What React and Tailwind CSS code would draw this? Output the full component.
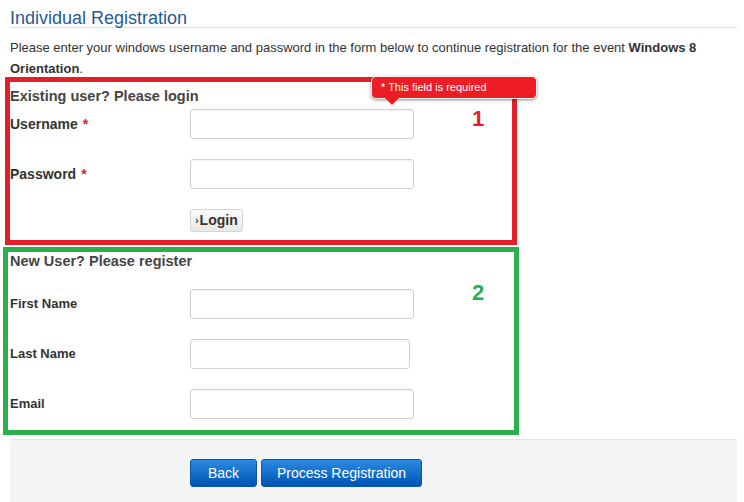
import React from 'react';

const Field = ({ label, required, width = 'w-[224px]', labelSize = 'text-[13px]' }) => (
  <div className="flex items-center h-[30px]">
    <label className={`w-[180px] font-bold text-[#333] ${labelSize}`}>
      {label}
      {required && <span className="text-[#e3202a] ml-[5px]">*</span>}
    </label>
    <input
      type="text"
      className={`${width} h-[30px] bg-white border border-[#cfcfcf] rounded-[3px] shadow-[inset_0_1px_1px_rgba(0,0,0,0.05)] outline-none`}
    />
  </div>
);

const App = () => {
  return (
    <div className="w-[744px] h-[502px] bg-white overflow-hidden font-['Liberation_Sans',Arial,sans-serif] text-[#333]">
      <div className="pl-[10px] pr-[7px]">
        <h1 className="pt-[9px] text-[18px] leading-[18px] text-[#1f5b93] border-b border-[#dedede]">
          Individual Registration
        </h1>
        <p className="mt-[9px] text-[13px] leading-[21px] text-[#333]">
          Please enter your windows username and password in the form below to continue registration for the event{' '}
          <b>Windows&nbsp;8</b> <b>Orientation</b>.
        </p>
      </div>

      {/* 1: login */}
      <div className="relative mt-[-2px] ml-[5px] w-[512px] border-[5px] border-[#e3202a] pt-[4px] pb-[8px]">
        <div className="text-[14.5px] leading-[20px] font-bold text-[#454545]">Existing user? Please login</div>
        <div className="mt-[3px] flex flex-col gap-[20px]">
          <Field label="Username" required labelSize="text-[14px]" />
          <Field label="Password" required labelSize="text-[14px]" />
          <div className="flex">
            <div className="w-[180px]" />
            <button className="h-[23px] w-[53px] flex items-center justify-center rounded-[3px] border border-[#d4d4d4] bg-gradient-to-b from-[#fbfbfb] to-[#e9e9e9] text-[14px] font-bold text-[#333]">
              <span className="text-[10px] mr-[1px]">›</span>Login
            </button>
          </div>
        </div>

        <div className="absolute left-[361px] top-[-6px] w-[166px] h-[23px] rounded-[5px] bg-[#ee1c25] border border-[#f5f5f5] shadow-[0_1px_3px_rgba(0,0,0,0.45)] text-white text-[11px] leading-[20px] pl-[9px]">
          * This field is required
          <span className="absolute left-[13px] bottom-[-7px] w-0 h-0 border-l-[7px] border-r-[7px] border-t-[7px] border-l-transparent border-r-transparent border-t-[#ee1c25]" />
        </div>
        <span className="absolute left-[462px] top-[26px] text-[22px] leading-[22px] font-bold text-[#e3202a]">1</span>
      </div>

      {/* 2: register */}
      <div className="relative mt-[2px] ml-[3px] w-[516px] border-[5px] border-[#2bae4c] pl-[2px] pb-[11px]">
        <div className="text-[14.5px] leading-[18px] font-bold text-[#454545]">New User? Please register</div>
        <div className="mt-[19px] flex flex-col gap-[20px]">
          <Field label="First Name" />
          <Field label="Last Name" width="w-[220px]" />
          <Field label="Email" />
        </div>
        <span className="absolute left-[464px] top-[30px] text-[22px] leading-[22px] font-bold text-[#2bae4c]">2</span>
      </div>

      {/* footer */}
      <div className="mt-[4px] ml-[10px] mr-[7px] h-[70px] bg-[#f4f4f4] border-t border-[#e6e6e6] pt-[19px] pl-[180px] flex items-start gap-[4px]">
        <button className="h-[28px] w-[67px] rounded-[3px] border border-[#0b55a8] bg-gradient-to-b from-[#2a8be2] to-[#0053b4] text-white text-[14px]">
          Back
        </button>
        <button className="h-[28px] w-[161px] rounded-[3px] border border-[#0b55a8] bg-gradient-to-b from-[#2a8be2] to-[#0053b4] text-white text-[14px]">
          Process Registration
        </button>
      </div>
    </div>
  );
};

export default App;
